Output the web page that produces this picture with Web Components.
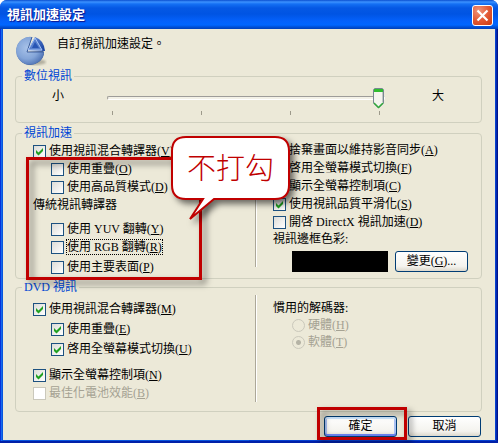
<!DOCTYPE html>
<html lang="zh-Hant">
<head>
<meta charset="utf-8">
<title>視訊加速設定</title>
<style>
	body {
		margin: 0;
		font: 12px/18px 'Liberation Serif', 'Noto Sans CJK TC', serif;
		color: #000;
		background: #fff;
	}

	.intro {
		display: flex;
		gap: 10px;
		padding: 5px 0 0 12px;
		height: 34px;
	}

	.intro p {
		margin: 0;
		line-height: 20px;
	}

	.indent {
		margin-left: 18px;
	}

	.gap-s {
		margin-top: 2px;
	}

	.gap-m {
		margin-top: 6px;
	}

	.gap-l {
		margin-top: 8px;
	}

	.frame {
		--top: -3px;
		--right: 53px;
		--bottom: -4px;
		--left: -7px;
	}

	.frame-ok {
		--top: -9px;
		--right: -10px;
		--bottom: -3px;
		--left: -7px;
	}

	.pick {
		display: flex;
		gap: 7px;
		margin: 4px 0 0 19px;
	}

	.swatch {
		width: 96px;
		height: 21px;
		background: #000;
	}

	.lower {
		padding-top: 5px;
	}

	.caption {
		line-height: 16px;
	}

	.actions {
		display: flex;
		justify-content: flex-end;
		gap: 11px;
		padding: 4px 14px 3px 0;
	}
</style>
</head>
<body>
<xp-window>
	<span slot="title">視訊加速設定</span>

	<div class="intro">
		<xp-pie></xp-pie>
		<p>自訂視訊加速設定。</p>
	</div>

	<xp-group>
		<span slot="legend">數位視訊</span>
		<xp-slider min="0" max="3" value="3" label="數位視訊">
			<span slot="low">小</span>
			<span slot="high">大</span>
		</xp-slider>
	</xp-group>

	<xp-group class="gap-s">
		<span slot="legend">視訊加速</span>
		<xp-columns style="--rule-end: 9px; --body-end: 2px">
			<div slot="left">
				<div style="height: 1px"></div>
				<xp-check checked>使用視訊混合轉譯器(<u>V</u>)</xp-check>
				<mark-frame class="frame">
					<xp-check class="indent">使用重疊(<u>O</u>)</xp-check>
					<xp-check class="indent">使用高品質模式(<u>D</u>)</xp-check>
					<div>傳統視訊轉譯器</div>
					<xp-check class="indent gap-m">使用 YUV 翻轉(<u>Y</u>)</xp-check>
					<xp-check class="indent" current>使用 RGB 翻轉(<u>R</u>)</xp-check>
					<xp-check class="indent gap-s">使用主要表面(<u>P</u>)</xp-check>
				</mark-frame>
			</div>
			<div slot="right">
				<xp-check checked>捨棄畫面以維持影音同步(<u>A</u>)</xp-check>
				<xp-check checked>啓用全螢幕模式切換(<u>F</u>)</xp-check>
				<xp-check checked>顯示全螢幕控制項(<u>C</u>)</xp-check>
				<xp-check checked>使用視訊品質平滑化(<u>S</u>)</xp-check>
				<xp-check>開啓 DirectX 視訊加速(<u>D</u>)</xp-check>
				<div class="caption">視訊邊框色彩:</div>
				<div class="pick">
					<div class="swatch"></div>
					<xp-button>變更(<u>G</u>)...</xp-button>
				</div>
			</div>
			<call-out slot="note">不打勾</call-out>
		</xp-columns>
	</xp-group>

	<xp-group>
		<span slot="legend">DVD 視訊</span>
		<xp-columns style="--body-end: 9px">
			<div slot="left" class="lower">
				<xp-check checked>使用視訊混合轉譯器(<u>M</u>)</xp-check>
				<xp-check class="indent gap-s" checked>使用重疊(<u>E</u>)</xp-check>
				<xp-check class="indent gap-s" checked>啓用全螢幕模式切換(<u>U</u>)</xp-check>
				<xp-check class="gap-l" checked>顯示全螢幕控制項(<u>N</u>)</xp-check>
				<xp-check disabled>最佳化電池效能(<u>B</u>)</xp-check>
			</div>
			<div slot="right" class="lower">
				<div class="caption">慣用的解碼器:</div>
				<xp-decoder>
					<span slot="hardware">硬體(<u>H</u>)</span>
					<span slot="software">軟體(<u>T</u>)</span>
				</xp-decoder>
			</div>
		</xp-columns>
	</xp-group>

	<div class="actions">
		<mark-frame class="frame-ok"><xp-button primary>確定</xp-button></mark-frame>
		<xp-button>取消</xp-button>
	</div>
</xp-window>

<script>
;(function () {
	class Base extends HTMLElement {
		constructor() {
			super()

			let template = document.createElement('template')
			template.innerHTML = this.template
			this.shadow = this.attachShadow({ mode: 'open' })
			this.shadow.appendChild(template.content.cloneNode(true))
		}
	}

	class XpWindow extends Base {
		get template() {
			return `
				<style>
					:host {
						display: flex;
						flex-direction: column;
						box-sizing: border-box;
						min-height: 100vh;
						padding: 0 3px 3px;
						border-radius: 7px 7px 0 0;
						background: linear-gradient(90deg, #0831d9 1px, #166aee 1px, #166aee 2px, #0855dd 2px, #0855dd 50%, #0540d0 50%, #0540d0 calc(100% - 2px), #00138c calc(100% - 1px));
						box-shadow: inset 0 -2px #0020a8;
					}

					header {
						display: flex;
						align-items: center;
						justify-content: space-between;
						height: 29px;
						margin: 0 -3px;
						padding: 0 5px 0 7px;
						box-sizing: border-box;
						border-radius: 7px 7px 0 0;
						background: linear-gradient(#0a4fd0 0, #3c92ff 2px, #1470f4 4px, #0558e4 8px, #0054e3 14px, #0461fb 21px, #0066ff 25px, #0050d8 27px, #0040b8 29px);
					}

					h1 {
						margin: 0;
						font: bold 13px/20px 'Liberation Sans', 'Noto Sans CJK TC', sans-serif;
						color: #fff;
						text-shadow: 1px 1px 1px #0f1089;
					}

					button {
						width: 21px;
						height: 21px;
						margin-top: 2px;
						padding: 0;
						border: 1px solid #fff;
						border-radius: 3px;
						background: radial-gradient(circle at 30% 25%, #f0957c, #e35a36 50%, #c93a10);
					}

					svg {
						display: block;
						margin: auto;
					}

					main {
						flex: 1;
						background: #ece9d8;
					}
				</style>
				<header>
					<h1><slot name="title"></slot></h1>
					<button type="button" aria-label="關閉">
						<svg width="13" height="13" viewBox="0 0 13 13" stroke="#fff" stroke-width="2.2">
							<path d="M1.5 1.5l10 10M11.5 1.5l-10 10" />
						</svg>
					</button>
				</header>
				<main><slot></slot></main>
			`
		}
	}

	class XpPie extends Base {
		get template() {
			return `
				<style>
					:host {
						display: block;
						width: 32px;
						height: 32px;
					}
				</style>
				<svg width="32" height="32" viewBox="0 0 32 32">
					<defs>
						<radialGradient id="disc" cx=".4" cy=".4" r=".65">
							<stop offset="0" stop-color="#a9c3e9" />
							<stop offset=".6" stop-color="#84a5d8" />
							<stop offset="1" stop-color="#4e72b4" />
						</radialGradient>
						<linearGradient id="cut" x2="1" y2="1">
							<stop offset="0" stop-color="#6f96df" />
							<stop offset="1" stop-color="#123c9c" />
						</linearGradient>
						<filter id="soft"><feGaussianBlur stdDeviation="1" /></filter>
					</defs>
					<ellipse cx="21" cy="28" rx="10" ry="3" fill="#8b8878" opacity=".6" filter="url(#soft)" />
					<path d="M17 3A14 14 0 1 0 29 20L28 17L12 18z" fill="#3f5f9b" />
					<path d="M17 3A14 14 0 1 0 29 18L12 18z" fill="url(#disc)" />
					<path d="M17 3L12 18H29" fill="none" stroke="#3e5f9d" />
					<path d="M20 3Q29 6 30 17L13 16z" fill="url(#cut)" />
					<path d="M20 4L13 16H27z" fill="#577fcd" stroke="#a9c6f6" />
					<path d="M20 8L17 14H24z" fill="#2855b4" />
				</svg>
			`
		}
	}

	class XpGroup extends Base {
		get template() {
			return `
				<style>
					:host {
						display: block;
						margin-left: 12px;
						margin-right: 13px;
					}

					fieldset {
						margin: 0;
						min-width: 0;
						padding: 0;
						border: 1px solid #d0d0bf;
						border-radius: 4px;
					}

					legend {
						margin-left: 6px;
						padding: 0 2px;
						line-height: 16px;
						color: #0046d5;
					}
				</style>
				<fieldset>
					<legend><slot name="legend"></slot></legend>
					<slot></slot>
				</fieldset>
			`
		}
	}

	class XpColumns extends Base {
		get template() {
			return `
				<style>
					:host {
						display: grid;
						grid-template-columns: 1fr 2px 1fr;
						position: relative;
						padding: 0 2px var(--body-end, 1px) 17px;
					}

					.rule {
						margin-bottom: var(--rule-end, 0);
						background: linear-gradient(90deg, #aca899 1px, #fff 1px);
					}

					slot[name='right'] {
						display: block;
						padding-left: 16px;
					}
				</style>
				<slot name="left"></slot>
				<div class="rule"></div>
				<slot name="right"></slot>
				<slot name="note"></slot>
			`
		}
	}

	class XpSlider extends Base {
		connectedCallback() {
			let input = this.shadow.querySelector('input')
			input.min = this.getAttribute('min')
			input.max = this.getAttribute('max')
			input.value = this.getAttribute('value')
			input.setAttribute('aria-label', this.getAttribute('label'))
		}

		get template() {
			return `
				<style>
					:host {
						display: flex;
						align-items: flex-start;
						height: 38px;
						padding: 0 37px 0 36px;
						line-height: 24px;
					}

					.scale {
						flex: 1;
						margin: 3px 47px 0 43px;
					}

					input {
						-webkit-appearance: none;
						appearance: none;
						display: block;
						width: 100%;
						height: 22px;
						margin: 0;
						background: none;
					}

					input::-webkit-slider-runnable-track {
						height: 4px;
						box-sizing: border-box;
						border: 1px solid;
						border-color: #9d9c99 #fff #fff #9d9c99;
						border-radius: 2px;
						background: #f3f1e7;
					}

					input::-webkit-slider-thumb {
						-webkit-appearance: none;
						width: 11px;
						height: 21px;
						margin-top: -9px;
						background: url("data:image/svg+xml,%3Csvg xmlns='http://www.w3.org/2000/svg' width='11' height='21'%3E%3Cpath d='M1.500 .5h8l1 1v13.500l-5 5-5-5v-13.500z' fill='%23f4f4ee' stroke='%23778892'/%3E%3Cpath d='M1 1h9v3h-9z' fill='%2330bc30'/%3E%3Cpath d='M1 15l4.500 4.500 4.500-4.500' fill='none' stroke='%2330a83c' stroke-width='1.500'/%3E%3Cpath d='M9.500 4v10' stroke='%23c4c8c4'/%3E%3C/svg%3E");
					}

					.ticks {
						display: flex;
						justify-content: space-between;
						padding: 2px 5px 0;
					}

					.ticks i {
						width: 1px;
						height: 4px;
						background: #9d9a8b;
					}
				</style>
				<slot name="low"></slot>
				<div class="scale">
					<input type="range">
					<div class="ticks"><i></i><i></i><i></i><i></i></div>
				</div>
				<slot name="high"></slot>
			`
		}
	}

	class XpCheck extends Base {
		connectedCallback() {
			let input = this.shadow.querySelector('input')
			input.checked = this.hasAttribute('checked')
			input.disabled = this.hasAttribute('disabled')
		}

		get template() {
			return `
				<style>
					:host {
						display: block;
						white-space: nowrap;
					}

					label {
						display: flex;
						align-items: center;
						gap: 3px;
						height: 18px;
					}

					input {
						-webkit-appearance: none;
						appearance: none;
						flex: none;
						box-sizing: border-box;
						width: 13px;
						height: 13px;
						margin: 0;
						border: 1px solid #1c5180;
						background: linear-gradient(135deg, #dcdcd7, #fff);
					}

					input:checked {
						background: url("data:image/svg+xml,%3Csvg xmlns='http://www.w3.org/2000/svg' width='11' height='11'%3E%3Cpath d='M2 4v3l2.500 2.500 4.500-4.500v-3l-4.500 4.500z' fill='%2321a121'/%3E%3C/svg%3E"), linear-gradient(135deg, #dcdcd7, #fff);
					}

					input:disabled {
						border-color: #cac8bb;
						background: #fff;
					}

					:host([disabled]) {
						color: #a5a293;
					}

					:host([current]) span {
						line-height: 14px;
						outline: 1px dotted #000;
					}
				</style>
				<label><input type="checkbox"><span><slot></slot></span></label>
			`
		}
	}

	// both radios share one root so that they stay one group
	class XpDecoder extends Base {
		get template() {
			return `
				<style>
					:host {
						display: block;
						margin-left: 19px;
						color: #a5a293;
					}

					label {
						display: flex;
						align-items: center;
						gap: 3px;
						height: 16px;
						margin-top: 1px;
					}

					input {
						-webkit-appearance: none;
						appearance: none;
						box-sizing: border-box;
						width: 13px;
						height: 13px;
						margin: 0;
						border: 1px solid #cac8bb;
						border-radius: 50%;
					}

					input:checked {
						background: radial-gradient(circle, #b5b3a5 2px, transparent 3px);
					}
				</style>
				<label><input type="radio" name="decoder" disabled><slot name="hardware"></slot></label>
				<label><input type="radio" name="decoder" disabled checked><slot name="software"></slot></label>
			`
		}
	}

	class XpButton extends Base {
		get template() {
			return `
				<style>
					:host {
						display: block;
					}

					button {
						display: block;
						box-sizing: border-box;
						width: 73px;
						height: 21px;
						padding: 0;
						border: 1px solid #003c74;
						border-radius: 3px;
						font: inherit;
						line-height: 17px;
						color: inherit;
						background: linear-gradient(#fff, #f4f3ee 75%, #dcd8cc);
					}

					:host([primary]) button {
						box-shadow: inset 0 2px #cee7ff, inset 0 -2px #6982ee, inset 2px 0 #a9c1f3, inset -2px 0 #a9c1f3;
					}
				</style>
				<button type="button"><slot></slot></button>
			`
		}
	}

	// red box laid over whatever is slotted in
	class MarkFrame extends Base {
		get template() {
			return `
				<style>
					:host {
						display: block;
						position: relative;
					}

					:host::after {
						content: '';
						position: absolute;
						top: var(--top);
						right: var(--right);
						bottom: var(--bottom);
						left: var(--left);
						z-index: 1;
						border: 3px solid #c00000;
						filter: drop-shadow(4px 4px 3px rgba(0, 0, 0, 0.5));
						pointer-events: none;
					}
				</style>
				<slot></slot>
			`
		}
	}

	class CallOut extends Base {
		get template() {
			return `
				<style>
					:host {
						position: absolute;
						top: -5px;
						left: 155px;
						z-index: 2;
						width: 119px;
						height: 84px;
						font: 300 29px/60px 'Noto Sans CJK TC', sans-serif;
						text-align: center;
						color: #c00000;
					}

					svg {
						position: absolute;
						inset: 0;
						overflow: visible;
						filter: drop-shadow(4px 4px 3px rgba(0, 0, 0, 0.55));
					}

					span {
						position: relative;
					}
				</style>
				<svg width="119" height="84" viewBox="0 0 119 84">
					<path d="M15 1H104Q118 1 118 15V49Q118 63 104 63H43L19 83L32 63H15Q1 63 1 49V15Q1 1 15 1z" fill="#fff" stroke="#c00000" stroke-width="2" />
				</svg>
				<span><slot></slot></span>
			`
		}
	}

	customElements.define('xp-window', XpWindow)
	customElements.define('xp-pie', XpPie)
	customElements.define('xp-group', XpGroup)
	customElements.define('xp-columns', XpColumns)
	customElements.define('xp-slider', XpSlider)
	customElements.define('xp-check', XpCheck)
	customElements.define('xp-decoder', XpDecoder)
	customElements.define('xp-button', XpButton)
	customElements.define('mark-frame', MarkFrame)
	customElements.define('call-out', CallOut)
})()
</script>
</body>
</html>
